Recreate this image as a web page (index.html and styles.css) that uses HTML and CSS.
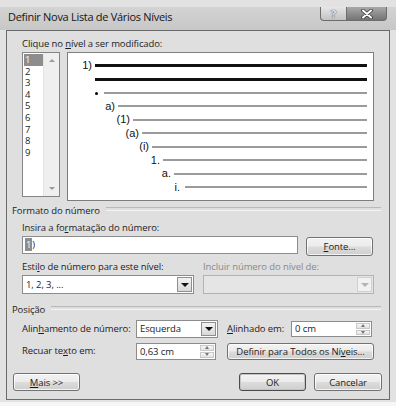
FILE: index.html
```html
<!DOCTYPE html>
<html lang="pt">
<head>
<meta charset="utf-8">
<title>Definir Nova Lista de Vários Níveis</title>
<link rel="stylesheet" href="styles.css">
</head>
<body>
<div class="window">
  <div class="titlebar">
    <span class="title">Definir Nova Lista de Vários Níveis</span>
    <div class="caption">
      <span class="cb cb-help">?</span>
      <span class="cb cb-close"><svg width="14" height="10" viewBox="0 0 14 10"><path d="M3 1.5 L11 8.5 M11 1.5 L3 8.5" stroke="#3a3a3a" stroke-width="3.6" stroke-linecap="round"/><path d="M3 1.5 L11 8.5 M11 1.5 L3 8.5" stroke="#ffffff" stroke-width="2" stroke-linecap="round"/></svg></span>
    </div>
  </div>
  <div class="client">
    <div class="lbl lbl-top">Clique no <u>n</u>ível a ser modificado:</div>
    <div class="level-row">
      <div class="listbox">
        <div class="levels">
          <div class="lvl"><span class="sel">1</span></div>
          <div class="lvl">2</div>
          <div class="lvl">3</div>
          <div class="lvl">4</div>
          <div class="lvl">5</div>
          <div class="lvl">6</div>
          <div class="lvl">7</div>
          <div class="lvl">8</div>
          <div class="lvl">9</div>
        </div>
        <div class="vscroll"><span class="tri-up"></span><span class="tri-down"></span></div>
      </div>
      <div class="preview">
        <div class="pv-row"><span class="pv-num w1">1)</span><span class="pv-bar dark"></span></div>
        <div class="pv-row"><span class="pv-num w1"></span><span class="pv-bar dark"></span></div>
        <div class="pv-row"><span class="pv-num w2"><span class="dot"></span></span><span class="pv-bar"></span></div>
        <div class="pv-row"><span class="pv-num w3">a)</span><span class="pv-bar"></span></div>
        <div class="pv-row"><span class="pv-num w4">(1)</span><span class="pv-bar"></span></div>
        <div class="pv-row"><span class="pv-num w5">(a)</span><span class="pv-bar"></span></div>
        <div class="pv-row"><span class="pv-num w6">(i)</span><span class="pv-bar"></span></div>
        <div class="pv-row"><span class="pv-num w7">1.</span><span class="pv-bar"></span></div>
        <div class="pv-row"><span class="pv-num w8">a.</span><span class="pv-bar"></span></div>
        <div class="pv-row"><span class="pv-num w9">i.</span><span class="pv-bar"></span></div>
      </div>
    </div>

    <div class="grp grp-fmt">Formato do número</div>
    <div class="lbl lbl-fmt">Insira a fo<u>r</u>matação do número:</div>
    <div class="fmt-row">
      <div class="textbox"><span class="hl">1</span>)</div>
      <button class="btn btn-fonte"><u>F</u>onte...</button>
    </div>
    <div class="style-grid">
      <div class="lbl">Esti<u>l</u>o de número para este nível:</div>
      <div class="lbl disabled">Incluir número do nível de:</div>
      <div class="combo"><span class="combo-val">1, 2, 3, ...</span><span class="drop"><span class="tri-down dark"></span></span></div>
      <div class="combo combo-dis"><span class="combo-val"></span><span class="drop"><span class="tri-down light"></span></span></div>
    </div>

    <div class="grp grp-pos">Posição</div>
    <div class="pos-grid">
      <div class="lbl">Alin<u>h</u>amento de número:</div>
      <div class="combo"><span class="combo-val">Esquerda</span><span class="drop"><span class="tri-down dark"></span></span></div>
      <div class="lbl pos-lbl2"><u>A</u>linhado em:</div>
      <div class="spin"><span class="spin-val">0 cm</span><span class="spin-btns"><span class="sb"><span class="tri-up small"></span></span><span class="sb"><span class="tri-down small"></span></span></span></div>
      <div class="lbl">Recuar te<u>x</u>to em:</div>
      <div class="spin spin-narrow"><span class="spin-val">0,63 cm</span><span class="spin-btns"><span class="sb"><span class="tri-up small"></span></span><span class="sb"><span class="tri-down small"></span></span></span></div>
      <button class="btn btn-all">Definir para Todos os Ní<u>v</u>eis...</button>
    </div>

    <div class="bottom-row">
      <button class="btn btn-mais"><u>M</u>ais &gt;&gt;</button>
      <button class="btn btn-ok">OK</button>
      <button class="btn btn-cancel">Cancelar</button>
    </div>
  </div>
</div>
</body>
</html>
```

FILE: styles.css
```css
* { box-sizing: border-box; }
html, body { margin: 0; padding: 0; }
body {
  width: 396px;
  height: 406px;
  overflow: hidden;
  background: #f6f6f6;
  font-family: "Open Sans", "Noto Sans", sans-serif;
  font-size: 9.5px;
  letter-spacing: -0.1px;
  color: #1c1c1c;
}
u { text-decoration: underline; text-underline-offset: 1px; }

.window {
  padding-top: 7px;
  background: #e2e2e2;
  height: 402px;
}
.titlebar {
  height: 23px;
  display: flex;
  justify-content: space-between;
  align-items: flex-start;
  padding: 0 9px 0 8px;
  background: linear-gradient(#d3d3d3, #c7c7c7);
}
.title {
  font-size: 11px;
  letter-spacing: -0.3px;
  line-height: 20px;
  color: #151515;
}
.caption { display: flex; }
.cb {
  height: 14px;
  display: flex;
  align-items: center;
  justify-content: center;
  border: 1px solid #6c6c6c;
  border-top: none;
}
.cb-help {
  width: 26px;
  border-right: none;
  border-radius: 0 0 0 4px;
  background: linear-gradient(#e6e6e6, #c2c2c2);
  font-weight: bold;
  font-size: 11px;
  color: #e8e8e8;
  text-shadow: 0 0 1px #555, 0 0 1px #555;
}
.cb-close {
  width: 41px;
  border-radius: 0 0 4px 0;
  background: linear-gradient(#a8a8a8, #747474);
}

.client {
  margin-left: 6px;
  width: 384px;
  height: 370px;
  border: 1px solid #6a6a6a;
  background: #dfdfdf;
  padding-top: 6px;
}
.lbl {
  line-height: 14px;
  height: 14px;
  white-space: nowrap;
}
.lbl.disabled { color: #8a8a8a; }
.lbl-top { margin-left: 15px; }

.level-row {
  display: flex;
  align-items: flex-start;
  gap: 7px;
  margin: 1px 0 0 15px;
}
.listbox {
  width: 38px;
  height: 145px;
  border: 1px solid #858585;
  background: #fff;
  display: flex;
}
.levels {
  width: 20px;
  padding-top: 1px;
}
.lvl {
  height: 11.6px;
  line-height: 11.6px;
  padding-left: 2px;
  font-size: 9.5px;
}
.lvl .sel {
  display: block;
  margin-left: -1px;
  width: 19px;
  padding-left: 1px;
  background: #8d8d8d;
  color: #fff;
  height: 12px;
  line-height: 12px;
}
.vscroll {
  width: 16px;
  background: #efefef;
  border-left: 1px solid #e4e4e4;
  display: flex;
  flex-direction: column;
  justify-content: space-between;
  align-items: center;
  padding: 6px 0 6px;
}
.tri-up, .tri-down {
  width: 0;
  height: 0;
  border-left: 3px solid transparent;
  border-right: 3px solid transparent;
}
.tri-up { border-bottom: 3px solid #9a9a9a; }
.tri-down { border-top: 3px solid #9a9a9a; }
.tri-down.dark { border-left-width: 4px; border-right-width: 4px; border-top: 4px solid #111; }
.tri-down.light { border-left-width: 4px; border-right-width: 4px; border-top: 4px solid #b4b4b4; }
.tri-up.small { border-left-width: 2.5px; border-right-width: 2.5px; border-bottom: 3px solid #777; }
.tri-down.small { border-left-width: 2.5px; border-right-width: 2.5px; border-top: 3px solid #777; }

.preview {
  width: 307px;
  height: 149px;
  border: 1px solid #7e7e7e;
  background: #fff;
  padding: 6px 6px 0 0;
}
.pv-row {
  display: flex;
  align-items: center;
  height: 13.5px;
}
.pv-num {
  flex: none;
  text-align: right;
  padding-right: 3px;
  font-family: "Liberation Sans", Arial, sans-serif;
  font-size: 11px;
  letter-spacing: 0;
  line-height: 13px;
  color: #111;
}
.w1 { width: 27px; }
.w2 { width: 36px; padding-right: 6px; }
.w3 { width: 50px; }
.w4 { width: 65px; }
.w5 { width: 74px; }
.w6 { width: 84px; }
.w7 { width: 95px; }
.w8 { width: 106px; }
.w9 { width: 117px; padding-right: 5px; }
.dot {
  display: inline-block;
  width: 3px;
  height: 3px;
  border-radius: 50%;
  background: #000;
  vertical-align: middle;
}
.pv-bar {
  flex: 1;
  height: 2px;
  background: #9b9b9b;
}
.pv-bar.dark { height: 3px; background: #111; }

.grp {
  display: flex;
  align-items: center;
  margin: 0 8px 0 5px;
  line-height: 14px;
  height: 14px;
  white-space: nowrap;
}
.grp::after {
  content: "";
  flex: 1;
  height: 2px;
  border-top: 1px solid #b9b9b9;
  border-bottom: 1px solid #f4f4f4;
  margin: 0 0 4px 6px;
}
.grp-fmt { margin-top: 3px; }
.lbl-fmt { margin: 3px 0 0 15px; }

.fmt-row {
  display: flex;
  align-items: flex-start;
  margin: 1px 0 0 15px;
}
.textbox {
  width: 276px;
  height: 18px;
  border: 1px solid #8c8c8c;
  background: #fff;
  padding-left: 2px;
  line-height: 16px;
}
.hl { background: #8d8d8d; color: #fff; padding: 0 1px; }

.btn {
  font: inherit;
  letter-spacing: -0.1px;
  color: #1c1c1c;
  border: 1px solid #727272;
  border-radius: 3px;
  background: linear-gradient(#f3f3f3 0%, #ebebeb 48%, #dcdcdc 52%, #cfcfcf 100%);
  box-shadow: inset 0 0 0 1px rgba(255,255,255,0.75);
  padding: 0;
  height: 18px;
  line-height: 15px;
  text-align: center;
  white-space: nowrap;
}
.btn-fonte {
  width: 67px;
  margin: 1px 0 0 8px;
  height: 19px;
}

.style-grid {
  display: grid;
  grid-template-columns: 172px 171px;
  column-gap: 9px;
  row-gap: 1px;
  margin: 4px 0 0 15px;
}
.combo {
  height: 19px;
  border: 1px solid #8c8c8c;
  background: #fff;
  display: flex;
  align-items: stretch;
}
.combo-val {
  flex: 1;
  padding-left: 3px;
  line-height: 17px;
}
.drop {
  width: 15px;
  border: 1px solid #8f8f8f;
  margin: 1px;
  background: linear-gradient(#f2f2f2, #d8d8d8);
  display: flex;
  align-items: center;
  justify-content: center;
}
.combo-dis {
  border-color: #b3b3b3;
  background: #e5e5e5;
}
.combo-dis .drop {
  border-color: #d0d0d0;
  background: #f1f1f1;
}

.grp-pos { margin-top: 9px; }
.pos-grid {
  display: grid;
  grid-template-columns: 114px 82px 9px 64px 81px;
  grid-template-rows: 18px 18px;
  row-gap: 4px;
  margin: 3px 0 0 15px;
  align-items: center;
}
.pos-grid .combo { grid-column: 2; height: 18px; }
.pos-grid .combo .combo-val { line-height: 16px; }
.pos-lbl2 { grid-column: 4; }
.spin {
  height: 16px;
  border: 1px solid #8c8c8c;
  background: #fff;
  display: flex;
}
.spin-narrow { width: 80px; height: 17px; }
.spin-val {
  flex: 1;
  padding-left: 3px;
  line-height: 14px;
}
.spin-narrow .spin-val { line-height: 15px; }
.spin-btns {
  width: 14px;
  display: flex;
  flex-direction: column;
  margin: 1px;
  gap: 1px;
}
.sb {
  flex: 1;
  border: 1px solid #c9c9c9;
  background: linear-gradient(#f6f6f6, #e2e2e2);
  display: flex;
  align-items: center;
  justify-content: center;
}
.btn-all {
  grid-column: 4 / 6;
  width: 147px;
  height: 17px;
}

.bottom-row {
  display: flex;
  align-items: center;
  margin: 13px 7px 0 6px;
}
.btn-mais { width: 67px; margin-right: auto; }
.btn-ok {
  width: 67px;
  margin-right: 8px;
  border-color: #4c4c4c;
  box-shadow: inset 0 0 0 1px #c4c4c4;
}
.btn-cancel { width: 68px; }
```
